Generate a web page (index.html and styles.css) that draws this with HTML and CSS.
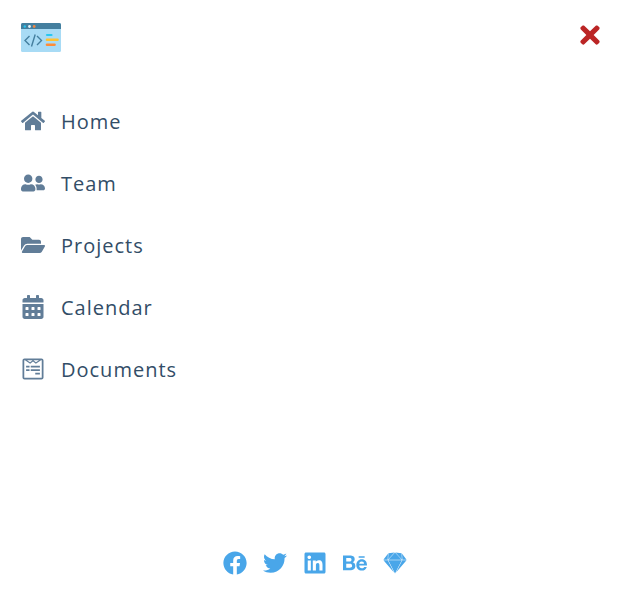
FILE: index.html
```html
<!DOCTYPE html>
<html lang="en">
<head>
<meta charset="utf-8">
<meta name="viewport" content="width=device-width, initial-scale=1">
<title>Menu</title>
<link rel="stylesheet" href="styles.css">
</head>
<body>
<aside class="sidebar">
  <header class="sidebar-header">
    <svg class="logo" viewBox="0 0 40 29" role="img" aria-label="Logo">
      <rect width="40" height="29" rx="1.500" fill="#a8dbf5"/>
      <path d="M0 6V1.500Q0 0 1.500 0H38.500Q40 0 40 1.500V6Z" fill="#447f9f"/>
      <circle cx="3.800" cy="3.500" r="1.200" fill="#28c8f0"/>
      <circle cx="8.500" cy="3.500" r="1.400" fill="#e8f4fa"/>
      <circle cx="13.200" cy="3.500" r="1.400" fill="#ee8744"/>
      <path d="M8.500 13 4 17.500l4.500 4.500M16 13 20.500 17.500 16 22M14.200 11.500 10.500 23.500" fill="none" stroke="#447f9f" stroke-width="1.400"/>
      <path d="M26 12h4.500" stroke="#28c8f0" stroke-width="2.200" stroke-linecap="round"/>
      <path d="M26 16.800h10.500" stroke="#ffc230" stroke-width="2.600" stroke-linecap="round"/>
      <path d="M26 21.800h7.500" stroke="#ff8c37" stroke-width="2.600" stroke-linecap="round"/>
    </svg>
    <button class="close-btn" type="button" aria-label="Close menu">
      <svg viewBox="0 0 352 512"><path d="M242.720 256l100.070-100.070c12.280-12.280 12.280-32.190 0-44.480l-22.240-22.240c-12.280-12.280-32.190-12.280-44.480 0L176 189.280 75.930 89.210c-12.280-12.280-32.190-12.280-44.480 0L9.210 111.450c-12.280 12.280-12.280 32.190 0 44.480L109.280 256 9.210 356.070c-12.280 12.280-12.280 32.190 0 44.480l22.240 22.240c12.280 12.280 32.200 12.280 44.480 0L176 322.720l100.070 100.070c12.280 12.280 32.200 12.280 44.480 0l22.240-22.240c12.280-12.280 12.280-32.190 0-44.480L242.720 256z"/></svg>
    </button>
  </header>
  <nav>
    <ul class="links">
      <li><a href="#home"><svg viewBox="0 0 576 512" aria-hidden="true"><path d="M280.370 148.260L96 300.110V464a16 16 0 0 0 16 16l112.060-.29a16 16 0 0 0 15.920-16V368a16 16 0 0 1 16-16h64a16 16 0 0 1 16 16v95.640a16 16 0 0 0 16 16.050L464 480a16 16 0 0 0 16-16V300L295.670 148.260a12.190 12.190 0 0 0-15.300 0zM571.600 251.470L488 182.560V44.050a12 12 0 0 0-12-12h-56a12 12 0 0 0-12 12v72.610L318.470 43a48 48 0 0 0-61 0L4.340 251.470a12 12 0 0 0-1.600 16.900l25.500 31A12 12 0 0 0 45.150 301l235.220-193.740a12.190 12.190 0 0 1 15.300 0L530.900 301a12 12 0 0 0 16.900-1.600l25.500-31a12 12 0 0 0-1.700-16.930z"/></svg>Home</a></li>
      <li><a href="#team"><svg viewBox="0 0 640 512" aria-hidden="true"><path d="M192 256c61.900 0 112-50.100 112-112S253.900 32 192 32 80 82.100 80 144s50.100 112 112 112zm76.800 32h-8.300c-20.800 10-43.900 16-68.500 16s-47.600-6-68.500-16h-8.300C51.600 288 0 339.600 0 403.200V432c0 26.500 21.500 48 48 48h288c26.500 0 48-21.500 48-48v-28.800c0-63.600-51.600-115.200-115.200-115.200zM480 256c53 0 96-43 96-96s-43-96-96-96-96 43-96 96 43 96 96 96zm48 32h-3.800c-13.900 4.800-28.600 8-44.200 8s-30.300-3.200-44.200-8H432c-20.400 0-39.200 5.900-55.700 15.400 24.400 26.300 39.700 61.200 39.700 99.800v38.400c0 2.200-.5 4.300-.6 6.400H592c26.500 0 48-21.500 48-48 0-61.900-50.100-112-112-112z"/></svg>Team</a></li>
      <li><a href="#projects"><svg viewBox="0 0 576 512" aria-hidden="true"><path d="M572.694 292.093L500.270 416.248A63.997 63.997 0 0 1 444.989 448H45.025c-18.523 0-30.064-20.093-20.731-36.093l72.424-124.155A64 64 0 0 1 152 256h399.964c18.523 0 30.064 20.093 20.730 36.093zM152 224h328v-48c0-26.510-21.490-48-48-48H272l-64-64H48C21.490 64 0 85.490 0 112v278.046l69.077-118.418C86.214 242.250 117.989 224 152 224z"/></svg>Projects</a></li>
      <li><a href="#calendar"><svg viewBox="0 0 448 512" aria-hidden="true"><path fill-rule="evenodd" d="M0 464c0 26.500 21.500 48 48 48h352c26.500 0 48-21.500 48-48V192H0v272zM332 256h40q12 0 12 12v40q0 12-12 12h-40q-12 0-12-12v-40q0-12 12-12zM332 384h40q12 0 12 12v40q0 12-12 12h-40q-12 0-12-12v-40q0-12 12-12zM204 256h40q12 0 12 12v40q0 12-12 12h-40q-12 0-12-12v-40q0-12 12-12zM204 384h40q12 0 12 12v40q0 12-12 12h-40q-12 0-12-12v-40q0-12 12-12zM76 256h40q12 0 12 12v40q0 12-12 12H76q-12 0-12-12v-40q0-12 12-12zM76 384h40q12 0 12 12v40q0 12-12 12H76q-12 0-12-12v-40q0-12 12-12zM400 64h-48V16c0-8.800-7.200-16-16-16h-32c-8.800 0-16 7.200-16 16v48H160V16c0-8.800-7.200-16-16-16h-32c-8.800 0-16 7.200-16 16v48H48C21.500 64 0 85.500 0 112v48h448v-48c0-26.500-21.500-48-48-48z"/></svg>Calendar</a></li>
      <li><a href="#documents"><svg viewBox="0 0 448 512" aria-hidden="true"><path d="M448 75.200v361.700c0 24.300-19 43.200-43.200 43.200H43.200C19.300 480 0 461.400 0 436.800V75.200C0 51.100 18.800 32 43.200 32h361.700c24 0 43.100 18.800 43.100 43.200zm-37.300 361.600V75.200c0-3-2.600-5.800-5.800-5.800h-9.300L285.300 144 224 94.100 162.800 144 52.500 69.300h-9.300c-3.200 0-5.800 2.800-5.800 5.800v361.700c0 3 2.600 5.800 5.800 5.800h361.700c3.200.1 5.800-2.700 5.800-5.800zM150.200 186v37H76.700v-37h73.500zm0 74.400v37.300H76.700v-37.300h73.500zm11.100-147.300l54-43.700H96.800l64.500 43.700zm210 72.900v37h-196v-37h196zm0 74.400v37.300h-196v-37.300h196zm-84.600-147.300l64.500-43.700H232.800l53.900 43.700zM371.300 335v37.300h-99.400V335h99.400z"/></svg>Documents</a></li>
    </ul>
  </nav>
  <ul class="social-icons">
    <li><a href="#facebook" aria-label="Facebook"><svg viewBox="0 0 512 512"><path d="M504 256C504 119 393 8 256 8S8 119 8 256c0 123.780 90.690 226.380 209.250 245V327.690h-63V256h63v-54.640c0-62.150 37-96.480 93.670-96.480 27.140 0 55.520 4.840 55.520 4.840v61h-31.280c-30.800 0-40.410 19.120-40.410 38.730V256h68.780l-11 71.690h-57.780V501C413.310 482.380 504 379.780 504 256z"/></svg></a></li>
    <li><a href="#twitter" aria-label="Twitter"><svg viewBox="0 0 512 512"><path d="M459.370 151.716c.325 4.548.325 9.097.325 13.645 0 138.720-105.583 298.558-298.558 298.558-59.452 0-114.680-17.219-161.137-47.106 8.447.974 16.568 1.299 25.340 1.299 49.055 0 94.213-16.568 130.274-44.832-46.132-.975-84.792-31.188-98.112-72.772 6.498.974 12.995 1.624 19.818 1.624 9.421 0 18.843-1.300 27.614-3.573-48.081-9.747-84.143-51.980-84.143-102.985v-1.299c13.969 7.797 30.214 12.670 47.431 13.319-28.264-18.843-46.781-51.005-46.781-87.391 0-19.492 5.197-37.360 14.294-52.954 51.655 63.675 129.300 105.258 216.365 109.807-1.624-7.797-2.599-15.918-2.599-24.040 0-57.828 46.782-104.934 104.934-104.934 30.213 0 57.502 12.670 76.670 33.137 23.715-4.548 46.456-13.320 66.599-25.340-7.798 24.366-24.366 44.833-46.132 57.827 21.117-2.273 41.584-8.122 60.426-16.243-14.292 20.791-32.161 39.308-52.628 54.253z"/></svg></a></li>
    <li><a href="#linkedin" aria-label="LinkedIn"><svg viewBox="0 0 448 512"><path d="M416 32H31.900C14.300 32 0 46.500 0 64.300v383.400C0 465.500 14.300 480 31.900 480H416c17.600 0 32-14.500 32-32.300V64.300c0-17.800-14.400-32.300-32-32.300zM135.400 416H69V202.200h66.500V416zm-33.200-243c-21.300 0-38.500-17.300-38.500-38.500S80.900 96 102.200 96c21.200 0 38.500 17.300 38.500 38.500 0 21.300-17.200 38.500-38.500 38.500zm282.100 243h-66.400V312c0-24.800-.5-56.700-34.500-56.700-34.600 0-39.900 27-39.900 54.900V416h-66.400V202.200h63.700v29.200h.9c8.900-16.800 30.600-34.500 62.900-34.500 67.200 0 79.700 44.300 79.700 101.900V416z"/></svg></a></li>
    <li><a href="#behance" aria-label="Behance"><svg viewBox="0 0 576 512"><path d="M232 237.200c31.800-15.200 48.400-38.200 48.400-74 0-70.600-52.600-87.800-113.300-87.800H0v354.400h171.800c64.400 0 124.900-30.900 124.900-102.900 0-44.500-21.100-77.400-64.700-89.700zM77.900 135.900H151c28.100 0 53.400 7.900 53.400 40.500 0 30.100-19.700 42.200-47.500 42.200h-79v-82.700zm83.300 233.700H77.900V272h84.900c34.300 0 56 14.300 56 50.600 0 35.800-25.900 47-57.600 47zm358.500-240.700H376V94h143.700v34.900zM576 305.200c0-75.900-44.400-139.200-124.900-139.200-78.200 0-131.300 58.800-131.300 135.800 0 79.900 50.300 134.700 131.300 134.700 61.300 0 101-27.600 120.100-86.300H509c-6.700 21.900-34.300 33.500-55.700 33.500-41.300 0-63-24.200-63-65.300h185.100c.3-4.200.6-8.700.6-13.200zM390.400 274c2.300-33.700 24.700-54.800 58.500-54.800 35.400 0 53.200 20.800 56.200 54.800H390.400z"/></svg></a></li>
    <li><a href="#sketch" aria-label="Sketch"><svg viewBox="0 0 512 512"><path d="M27.500 162.200L9 187.100h90.500l6.900-130.700-78.900 105.800zM396.300 45.700L267.700 32l135.700 147.200-7.100-133.500zM112.200 218.300l-11.200-22H9.900L234.800 458zm2-31.200h284l-81.500-88.500L256.300 33zm297.300 9.100L277.600 458l224.800-261.700h-90.900zM415.400 69L406 56.400l.9 17.300 6.100 113.400h90.300zM113.500 93.500l-4.600 85.600L244.700 32 116.100 45.700zm287.700 102.700h-290l42.400 82.900L256.300 480l144.900-283.800z"/></svg></a></li>
  </ul>
</aside>
</body>
</html>
```
FILE: styles.css
```css
* {
  box-sizing: border-box;
  margin: 0;
  padding: 0;
}

body {
  background: #fff;
  color: #324d67;
  font-family: "Segoe UI", "Open Sans", "Noto Sans", sans-serif;
}

ul {
  list-style: none;
}

svg {
  display: block;
  fill: currentColor;
}

.sidebar {
  display: flex;
  flex-direction: column;
  min-height: 100vh;
}

.sidebar-header {
  display: flex;
  justify-content: space-between;
  align-items: center;
  padding: 21px 25px 12px 21px;
}

.logo {
  width: 40px;
  height: 29px;
}

.close-btn {
  border: 0;
  background: transparent;
  color: #bb2525;
  cursor: pointer;
  padding-bottom: 4px;
}

.close-btn svg {
  width: 28px;
  height: 28px;
}

.links {
  padding-top: 26px;
}

.links a {
  display: flex;
  align-items: center;
  gap: 16px;
  padding: 16px 21px;
  color: #324d67;
  font-size: 20px;
  line-height: 30px;
  letter-spacing: 1px;
  text-decoration: none;
}

.links svg {
  width: 24px;
  height: 24px;
  margin-bottom: 2px;
  color: #617d98;
}

.social-icons {
  display: flex;
  justify-content: center;
  gap: 16px;
  margin-top: auto;
  padding-bottom: 38px;
}

.social-icons a {
  display: block;
  color: #49a6e9;
}

.social-icons svg {
  width: 24px;
  height: 24px;
}
```
